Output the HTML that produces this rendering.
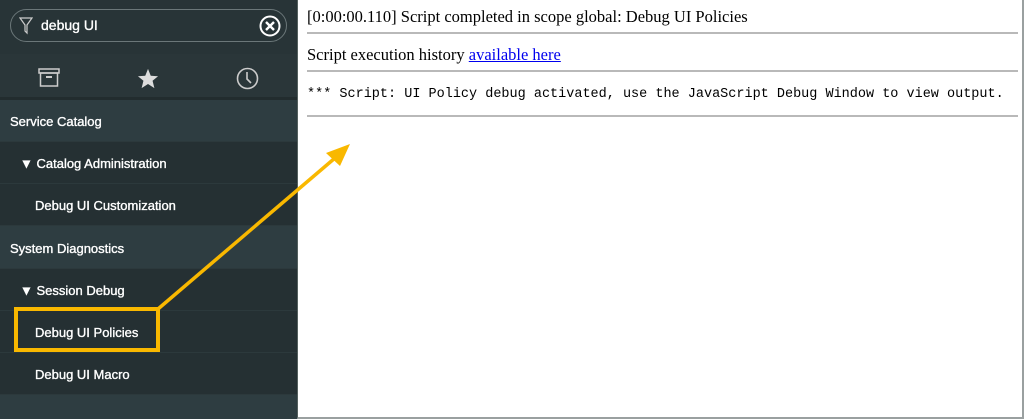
<!DOCTYPE html>
<html><head><style>
*{margin:0;padding:0;box-sizing:border-box}
body{width:1024px;height:419px;overflow:hidden;background:#fff;position:relative;font-family:"Liberation Sans",sans-serif}
#side{position:absolute;left:0;top:0;width:297px;height:419px;background:#2e3d41}
.srch{position:absolute;left:0;top:0;width:297px;height:54px;background:#283437}
.box{position:absolute;left:10px;top:9px;width:277px;height:33px;border:1px solid #6b7779;border-radius:17px}
.icons{position:absolute;left:0;top:54px;width:297px;height:46px;background:#2a3639;border-bottom:3px solid #222c2e}
.row{position:absolute;left:0;width:297px;height:42px;color:#fff;font-size:13px;line-height:44px;font-family:"Liberation Sans",sans-serif;-webkit-text-stroke:0.35px #fff;border-bottom:1px solid #2c393c}
.h{background:#2e3d41;padding-left:10px}
.s{background:#253033}
#main{position:absolute;left:297px;top:0;width:727px;height:419px;border-left:1px solid #55615f;border-right:2px solid #9aa0a0;border-bottom:2px solid #9aa0a0}
.t{position:absolute;left:9px;font-family:"Liberation Serif",serif;font-size:16.5px;color:#000}
.hr{position:absolute;left:9px;right:4px;height:2px;background:#b9b9b9}
a{color:#0000ee}
</style></head><body>
<div id="side">
<div class="srch"><div class="box">
<svg style="position:absolute;left:8px;top:7px" width="14" height="18" viewBox="0 0 14 18"><path d="M1 1H13L8 8V16L6 14V8Z" fill="none" stroke="#ccc" stroke-width="1.2"/></svg>
<span style="position:absolute;left:30px;top:7px;color:#fff;font-size:14px;font-family:'Liberation Sans',sans-serif;-webkit-text-stroke:0.35px #fff">debug UI</span>
<svg style="position:absolute;left:248px;top:5px" width="22" height="22" viewBox="0 0 22 22"><circle cx="11" cy="11" r="9.5" fill="none" stroke="#fff" stroke-width="2"/><path d="M7 7L15 15M15 7L7 15" stroke="#fff" stroke-width="2.4"/></svg>
</div></div>
<div class="icons">
<svg style="position:absolute;left:38px;top:14px" width="22" height="20" viewBox="0 0 22 20"><rect x="1" y="1" width="20" height="4" fill="none" stroke="#ccc" stroke-width="1.5"/><rect x="2.5" y="5" width="17" height="13" fill="none" stroke="#ccc" stroke-width="1.5"/><rect x="8" y="8" width="6" height="2" fill="#ccc"/></svg>
<svg style="position:absolute;left:137px;top:14px" width="22" height="21" viewBox="0 0 24 23"><path d="M12 1L15 8.5L23 9L17 14L19 22L12 17.5L5 22L7 14L1 9L9 8.5Z" fill="#ddd"/></svg>
<svg style="position:absolute;left:236px;top:13px" width="23" height="23" viewBox="0 0 23 23"><circle cx="11.5" cy="11.5" r="10" fill="none" stroke="#ccc" stroke-width="1.6"/><path d="M11 5V12L15 16" fill="none" stroke="#ccc" stroke-width="1.6"/></svg>
</div>
<div class="row h" style="top:100px">Service Catalog</div>
<div class="row s" style="top:142px;padding-left:20px">▼ Catalog Administration</div>
<div class="row s" style="top:184px;padding-left:35px">Debug UI Customization</div>
<div class="row h" style="top:227px">System Diagnostics</div>
<div class="row s" style="top:269px;padding-left:20px">▼ Session Debug</div>
<div class="row s" style="top:311px;padding-left:35px">Debug UI Policies</div>
<div class="row s" style="top:353px;padding-left:35px">Debug UI Macro</div>
</div>
<div id="main">
<div class="t" style="top:7px">[0:00:00.110] Script completed in scope global: Debug UI Policies</div>
<div class="hr" style="top:32px"></div>
<div class="t" style="top:45px">Script execution history <a href="#">available here</a></div>
<div class="hr" style="top:70px"></div>
<div class="t" style="top:87px;font-family:'Liberation Mono',monospace;font-size:13.5px">*** Script: UI Policy debug activated, use the JavaScript Debug Window to view output.</div>
<div class="hr" style="top:115px"></div>
</div>
<svg style="position:absolute;left:0;top:0" width="1024" height="419">
<rect x="16" y="309" width="142" height="41" fill="none" stroke="#f9b800" stroke-width="4"/>
<path d="M158 309L335 158" stroke="#f9b800" stroke-width="3.5"/>
<path d="M350 144L326 153L340 166Z" fill="#f9b800"/>
</svg>
</body></html>
